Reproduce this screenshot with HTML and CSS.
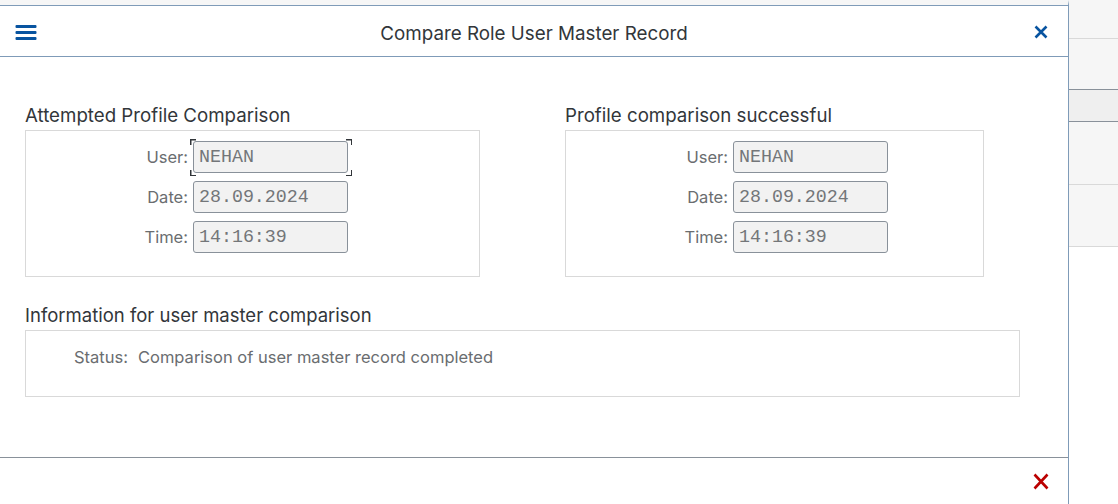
FILE: index.html
```html
<!DOCTYPE html>
<html lang="en">
<head>
<meta charset="utf-8">
<title>Compare Role User Master Record</title>
<link rel="stylesheet" href="styles.css">
</head>
<body>
<div class="screen">
  <div class="dialog">
    <header class="dlg-head">
      <button class="icon-btn menu-btn" aria-label="Menu">
        <svg width="22" height="15" viewBox="0 0 22 15"><rect x="0.5" y="0" width="21" height="3" rx="1"/><rect x="0.5" y="6" width="21" height="3" rx="1"/><rect x="0.5" y="12" width="21" height="3" rx="1"/></svg>
      </button>
      <h1 class="dlg-title">Compare Role User Master Record</h1>
      <button class="icon-btn close-btn" aria-label="Close">
        <svg width="14" height="14" viewBox="0 0 14 14"><path d="M1.5 1.5 L12.5 12.5 M12.5 1.5 L1.5 12.5"/></svg>
      </button>
    </header>

    <main class="dlg-body">
      <div class="groups">
        <section class="group group-left">
          <h2 class="group-title">Attempted Profile Comparison</h2>
          <div class="group-box">
            <div class="field-grid">
              <span class="label">User:</span><div class="input focused">NEHAN</div>
              <span class="label">Date:</span><div class="input">28.09.2024</div>
              <span class="label">Time:</span><div class="input">14:16:39</div>
            </div>
          </div>
        </section>
        <section class="group group-right">
          <h2 class="group-title">Profile comparison successful</h2>
          <div class="group-box">
            <div class="field-grid">
              <span class="label">User:</span><div class="input">NEHAN</div>
              <span class="label">Date:</span><div class="input">28.09.2024</div>
              <span class="label">Time:</span><div class="input">14:16:39</div>
            </div>
          </div>
        </section>
      </div>

      <section class="info">
        <h2 class="group-title info-title">Information for user master comparison</h2>
        <div class="info-box">
          <span class="label status-label">Status:</span>
          <span class="status-value">Comparison of user master record completed</span>
        </div>
      </section>
    </main>

    <footer class="dlg-foot">
      <button class="icon-btn cancel-btn" aria-label="Cancel">
        <svg width="16" height="17" viewBox="0 0 16 17"><path d="M1.5 1.5 L14.5 15.5 M14.5 1.5 L1.5 15.5"/></svg>
      </button>
    </footer>
  </div>

  <aside class="side">
    <div class="side-seg seg-1"></div>
    <div class="side-seg seg-2"></div>
    <div class="side-seg seg-3"></div>
    <div class="side-seg seg-4"></div>
    <div class="side-seg seg-5"></div>
  </aside>
</div>
</body>
</html>
```

FILE: styles.css
```css
* { box-sizing: border-box; }

html, body {
  margin: 0;
  padding: 0;
}

body {
  width: 1118px;
  height: 504px;
  overflow: hidden;
  background: #ffffff;
  font-family: Inter, "Noto Sans", "Liberation Sans", sans-serif;
  color: #32363a;
}

.screen {
  display: flex;
  height: 504px;
  background: #ffffff;
}

/* ---------- dialog ---------- */
.dialog {
  width: 1069px;
  height: 504px;
  display: flex;
  flex-direction: column;
  border-top: 5px solid #f6f6f6;
  border-right: 1px solid #7f9bb8;
  background: #ffffff;
  position: relative;
}

.dialog::before {
  content: "";
  position: absolute;
  left: 0;
  right: 0;
  top: 0;
  height: 1px;
  background: #7f9bb8;
}

.dlg-head {
  height: 52px;
  padding-top: 1px;
  border-bottom: 1px solid #7f9bb8;
  display: grid;
  grid-template-columns: 1fr auto 1fr;
  align-items: center;
}

.icon-btn {
  border: 0;
  background: transparent;
  padding: 0;
  margin: 0;
  display: flex;
  align-items: center;
  justify-content: center;
  cursor: pointer;
}

.menu-btn {
  justify-self: start;
  margin-left: 15px;
  margin-top: 3px;
}

.menu-btn svg { fill: #0854a0; display: block; }

.close-btn {
  justify-self: end;
  margin-right: 20px;
  margin-top: 2px;
}

.close-btn svg path {
  stroke: #0854a0;
  stroke-width: 2.6;
  fill: none;
}

.dlg-title {
  margin: 6px 0 0 0;
  font-size: 18.8px;
  font-weight: 400;
  line-height: 22px;
  color: #32363a;
}

/* ---------- body ---------- */
.dlg-body {
  flex: 1;
  padding: 48px 0 0 25px;
}

.groups {
  display: flex;
  gap: 85px;
}

.group-left .group-box { width: 455px; }
.group-right .group-box { width: 419px; }

.group-title {
  margin: 0 0 3px 0;
  font-size: 18.7px;
  font-weight: 400;
  line-height: 22px;
  color: #32363a;
}

.info-title {
  font-size: 18.5px;
  margin-bottom: 4px;
}

.group-box {
  border: 1px solid #d9d9d9;
  padding: 10px 0 23px 0;
}

.field-grid {
  display: grid;
  grid-template-columns: 162px 155px;
  column-gap: 5px;
  row-gap: 8px;
  align-items: center;
}

.label {
  font-size: 16.5px;
  line-height: 20px;
  color: #6a6d70;
  text-align: right;
}

.input {
  position: relative;
  height: 32px;
  border: 1px solid #89919a;
  border-radius: 3px;
  background: #f2f2f2;
  padding: 0 5px;
  font-family: "Liberation Mono", "DejaVu Sans Mono", monospace;
  font-size: 18.3px;
  line-height: 30px;
  color: #737679;
}

.input.focused::after {
  content: "";
  position: absolute;
  left: -4px;
  right: -5px;
  top: -3px;
  bottom: -4px;
  background:
    linear-gradient(#32363a, #32363a) left top / 6px 1.5px no-repeat,
    linear-gradient(#32363a, #32363a) left top / 1.5px 6px no-repeat,
    linear-gradient(#32363a, #32363a) right top / 6px 1.5px no-repeat,
    linear-gradient(#32363a, #32363a) right top / 1.5px 6px no-repeat,
    linear-gradient(#32363a, #32363a) left bottom / 6px 1.5px no-repeat,
    linear-gradient(#32363a, #32363a) left bottom / 1.5px 6px no-repeat,
    linear-gradient(#32363a, #32363a) right bottom / 6px 1.5px no-repeat,
    linear-gradient(#32363a, #32363a) right bottom / 1.5px 6px no-repeat;
}

.info {
  margin-top: 27px;
}

.info-box {
  width: 995px;
  height: 67px;
  border: 1px solid #d9d9d9;
  padding: 16px 0 0 48px;
  display: flex;
  align-items: baseline;
  gap: 10px;
}

.status-label { text-align: left; }

.status-value {
  font-size: 16.5px;
  line-height: 20px;
  color: #6a6d70;
}

/* ---------- footer ---------- */
.dlg-foot {
  height: 47px;
  border-top: 1px solid #89919a;
  display: flex;
  align-items: center;
  justify-content: flex-end;
  padding-right: 19px;
}

.cancel-btn svg path {
  stroke: #bb0000;
  stroke-width: 2.6;
  fill: none;
}

/* ---------- side panel ---------- */
.side {
  flex: 1;
  display: flex;
  flex-direction: column;
  background: #ffffff;
}

.side-seg { background: #f6f6f6; }

.seg-1 { height: 39px; border-bottom: 1px solid #d9d9d9; }
.seg-2 { height: 51px; border-bottom: 1px solid #89919a; }
.seg-3 { height: 32px; border-bottom: 1px solid #89919a; background: #efefef; }
.seg-4 { height: 63px; border-bottom: 1px solid #d9d9d9; }
.seg-5 { height: 62px; border-bottom: 1px solid #d9d9d9; }
```
